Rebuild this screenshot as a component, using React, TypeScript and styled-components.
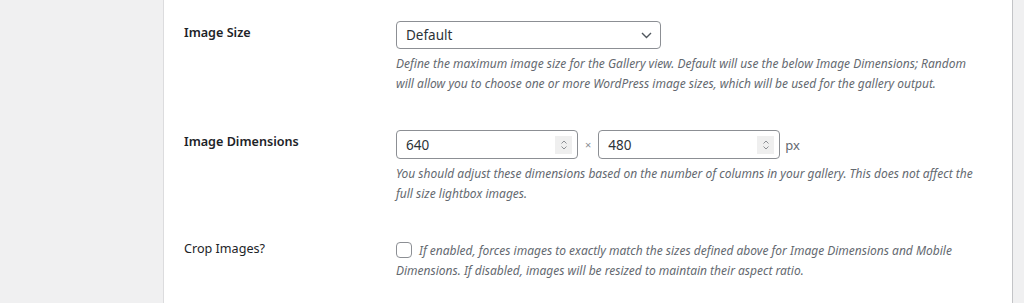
import React from 'react';
import styled, { createGlobalStyle } from 'styled-components';

const GlobalStyle = createGlobalStyle`
  html, body {
    margin: 0;
    padding: 0;
    background: #f0f0f1;
  }
  body {
    font-family: "Noto Sans", "Open Sans", sans-serif;
    color: #1d2327;
  }
`;

const Page = styled.div`
  display: flex;
  height: 303px;
  overflow: hidden;
`;

const Gutter = styled.div<{ $width: number }>`
  width: ${(p) => p.$width}px;
  flex: none;
  background: #f0f0f1;
`;

const Panel = styled.div`
  flex: 1;
  background: #fff;
  border-left: 1px solid #dcdcde;
  border-right: 1px solid #c3c4c7;
  padding: 0 20px;
`;

const Row = styled.div<{ $bottom: number }>`
  display: grid;
  grid-template-columns: 212px 1fr;
  padding: 20px 0 ${(p) => p.$bottom}px;
`;

const Label = styled.div<{ $weight: number; $top: number }>`
  font-size: 12.6px;
  font-weight: ${(p) => p.$weight};
  line-height: 1.3;
  padding-top: ${(p) => p.$top}px;
`;

const Field = styled.div`
  display: flex;
  flex-direction: column;
`;

const Description = styled.p`
  margin: 5px 0 0;
  font-size: 12px;
  font-style: italic;
  line-height: 19.5px;
  color: #646970;
  max-width: 580px;
`;

const Select = styled.div`
  width: 265px;
  height: 28px;
  margin-top: 1px;
  box-sizing: border-box;
  border: 1px solid #8c8f94;
  border-radius: 4px;
  display: flex;
  align-items: center;
  justify-content: space-between;
  padding: 0 8px 0 9px;
  font-size: 13.5px;
  color: #2c3338;
`;

const Inline = styled.div`
  display: flex;
  align-items: center;
  gap: 7px;
`;

const NumberBox = styled.div`
  width: 182px;
  height: 29px;
  box-sizing: border-box;
  border: 1px solid #8c8f94;
  border-radius: 4px;
  display: flex;
  align-items: center;
  justify-content: space-between;
  padding: 0 5px 0 9px;
  font-size: 13.5px;
  color: #2c3338;
`;

const Spinner = styled.div`
  width: 17px;
  height: 18px;
  background: #efefef;
  display: flex;
  align-items: center;
  justify-content: center;
`;

const Times = styled.span`
  font-size: 11px;
  color: #8c8f94;
`;

const Unit = styled.span`
  font-size: 13px;
  color: #646970;
  margin-left: -2px;
`;

const CheckLine = styled.p`
  margin: 0;
  font-size: 12px;
  font-style: italic;
  line-height: 19.5px;
  color: #646970;
  max-width: 580px;
`;

const Checkbox = styled.span`
  display: inline-block;
  width: 14px;
  height: 14px;
  border: 1px solid #8c8f94;
  border-radius: 4px;
  vertical-align: -3px;
  margin-right: 7px;
  background: #fff;
`;

const Chevron = () => (
  <svg width="11" height="7" viewBox="0 0 11 7" fill="none">
    <path d="M1 1l4.5 4.5L10 1" stroke="#50575e" strokeWidth="1.4" />
  </svg>
);

const SpinIcon = () => (
  <svg width="8" height="12" viewBox="0 0 8 12" fill="none">
    <path d="M1.5 4.5L4 2l2.5 2.5M1.5 7.5L4 10l2.5-2.5" stroke="#8c8f94" strokeWidth="1" />
  </svg>
);

const NumberInput: React.FC<{ value: string }> = ({ value }) => (
  <NumberBox>
    <span>{value}</span>
    <Spinner>
      <SpinIcon />
    </Spinner>
  </NumberBox>
);

export default function App() {
  return (
    <>
      <GlobalStyle />
      <Page>
        <Gutter $width={163} />
        <Panel>
          <Row $bottom={17}>
            <Label $weight={600} $top={5}>Image Size</Label>
            <Field>
              <Select>
                <span>Default</span>
                <Chevron />
              </Select>
              <Description>
                Define the maximum image size for the Gallery view. Default will use the below Image Dimensions; Random
                will allow you to choose one or more WordPress image sizes, which will be used for the gallery output.
              </Description>
            </Field>
          </Row>
          <Row $bottom={18}>
            <Label $weight={600} $top={4}>Image Dimensions</Label>
            <Field>
              <Inline>
                <NumberInput value="640" />
                <Times>×</Times>
                <NumberInput value="480" />
                <Unit>px</Unit>
              </Inline>
              <Description>
                You should adjust these dimensions based on the number of columns in your gallery. This does not affect the
                full size lightbox images.
              </Description>
            </Field>
          </Row>
          <Row $bottom={20}>
            <Label $weight={400} $top={0}>Crop Images?</Label>
            <Field>
              <CheckLine>
                <Checkbox />
                If enabled, forces images to exactly match the sizes defined above for Image Dimensions and Mobile
                Dimensions. If disabled, images will be resized to maintain their aspect ratio.
              </CheckLine>
            </Field>
          </Row>
        </Panel>
        <Gutter $width={11} />
      </Page>
    </>
  );
}
